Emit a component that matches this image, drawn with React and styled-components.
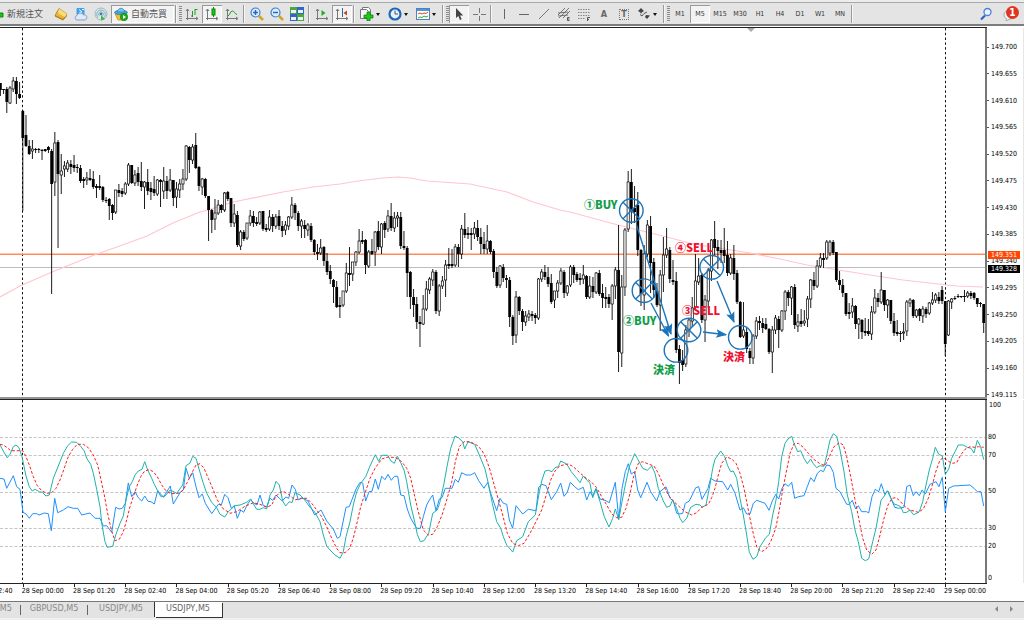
import React, { useState } from 'react';
import styled, { createGlobalStyle, css } from 'styled-components';

// one candle: high, body top, body bottom, low, direction (u / d)
const CANDLES = `
83 83 90 95 d|89 89 90 93 d|87 89 102 112 d|86 88 103 103 u|77 81 89 91 u|77 81 94 103 d|82 94 98 98 d|
110 111 138 210 d|115 135 146 146 d|140 146 154 154 d|140 149 151 158 u|148 149 150 152 d|148 149 150 152 d|149 150 151 159 d|149 149 151 151 d|
146 147 150 152 d|149 151 184 293 d|132 143 182 195 u|140 142 174 247 d|154 171 175 193 u|161 166 169 176 u|160 163 169 171 u|160 164 167 173 d|
155 165 168 171 d|164 167 168 172 d|165 168 181 182 d|177 179 181 187 d|172 178 180 184 u|169 178 180 180 d|171 179 187 188 d|184 186 188 197 d|
175 186 188 189 d|186 187 200 201 d|197 200 201 202 d|198 199 206 219 d|204 205 213 219 d|190 190 212 213 u|184 190 193 196 d|188 191 194 196 d|
182 184 193 194 u|163 165 184 185 u|165 165 183 183 d|170 175 183 185 u|167 173 182 185 d|162 181 187 190 d|181 182 187 208 u|169 182 191 194 d|
182 188 192 199 d|176 189 193 195 d|179 180 194 195 u|179 180 182 206 d|167 181 191 198 u|176 181 191 198 d|169 180 190 191 u|180 180 198 205 d|
182 189 197 207 u|179 184 190 197 u|169 179 184 189 u|145 146 179 180 u|146 147 160 172 d|144 147 160 163 u|133 145 168 168 d|166 167 186 190 d|
178 179 187 194 u|178 179 196 197 d|196 196 210 240 d|209 210 220 232 d|199 213 219 229 u|200 205 213 214 u|204 205 210 212 d|192 193 210 211 u|
191 192 199 200 d|198 198 223 226 d|204 214 223 226 u|211 215 245 246 d|230 232 246 249 u|230 232 239 240 d|223 223 238 239 u|210 216 223 225 u|
211 216 223 226 d|217 222 224 225 d|211 212 223 224 u|211 211 229 230 d|224 228 230 231 d|210 217 229 230 u|214 217 226 231 d|214 217 226 228 u|
210 216 226 229 d|221 226 231 236 d|221 225 230 234 u|216 217 226 229 u|197 205 217 218 u|203 205 213 219 d|211 213 226 230 d|219 221 226 237 u|
220 225 229 237 d|223 225 230 235 u|223 226 240 241 d|239 240 252 254 d|244 252 254 259 d|239 248 253 254 u|246 247 261 265 d|253 261 272 274 d|
265 271 279 283 d|279 280 287 302 d|281 287 307 307 d|297 305 307 317 d|291 291 305 306 u|263 273 291 292 u|247 273 275 285 d|262 262 274 280 u|
251 252 262 265 u|229 241 252 253 u|231 240 242 243 d|239 240 265 273 d|250 252 266 267 u|239 251 254 254 d|231 232 252 265 u|221 231 247 249 d|
223 224 247 253 u|221 223 230 237 d|210 216 229 231 u|203 216 228 230 d|212 218 228 231 u|212 216 218 226 u|212 217 246 248 d|231 246 248 249 d|
246 248 273 296 d|271 272 297 308 d|289 297 305 316 d|297 304 322 328 d|316 322 324 346 d|295 309 324 324 u|281 289 309 310 u|277 279 290 293 u|
269 272 280 285 u|270 272 311 313 d|284 286 311 315 u|276 281 286 288 u|260 265 280 296 u|248 264 266 268 d|249 264 266 267 d|244 247 265 266 u|
244 247 254 266 d|225 229 254 258 u|213 229 235 237 d|227 233 235 238 d|228 233 235 249 d|222 228 234 238 u|220 228 237 240 d|228 237 244 253 d|
232 244 249 253 d|225 241 249 253 u|240 241 252 253 d|249 251 272 277 d|267 272 286 287 d|265 266 285 287 u|264 267 278 281 d|275 278 280 287 d|
277 280 317 326 d|315 317 336 344 d|291 297 335 342 u|296 297 311 314 d|309 311 322 330 d|311 316 322 325 u|310 314 317 320 u|311 314 316 320 d|
313 315 318 323 d|278 279 318 319 u|269 272 279 281 u|265 272 277 279 d|267 277 284 286 d|274 283 302 303 d|291 291 300 307 u|280 283 291 297 u|
268 271 283 284 u|270 272 293 297 d|285 286 293 295 u|265 267 285 286 u|265 267 275 282 d|272 274 280 281 d|273 278 280 284 d|265 275 279 283 u|
275 276 297 298 d|276 286 297 298 u|277 286 292 297 d|272 273 292 293 u|270 273 294 295 d|284 293 298 307 d|287 297 299 307 d|294 297 304 307 d|
284 286 304 319 u|267 270 286 298 u|225 270 352 371 d|275 287 353 366 u|228 230 287 295 u|171 182 229 231 u|169 182 211 223 d|186 208 212 222 d|
192 205 250 255 d|249 250 294 305 d|245 254 295 309 u|220 225 254 256 u|216 226 263 292 d|258 262 290 297 d|283 291 305 306 d|270 275 305 330 u|
237 255 275 291 u|228 249 255 257 u|247 250 279 282 d|260 280 282 284 d|272 281 350 352 d|345 349 363 383 d|350 360 365 370 d|325 330 364 366 u|
318 320 330 336 u|297 308 321 326 u|254 281 307 308 u|258 276 282 284 u|273 275 320 322 d|295 300 320 341 u|268 270 301 307 u|239 240 271 280 u|
221 239 248 255 d|240 247 251 268 d|240 250 253 262 d|228 250 256 262 d|241 255 273 275 d|254 258 273 274 u|245 258 274 279 d|270 273 302 303 d|
301 302 337 337 d|302 330 336 337 u|328 332 349 352 d|348 351 358 363 d|334 336 358 363 u|317 321 336 338 u|316 321 323 329 d|318 323 328 332 d|
318 324 329 329 d|328 329 352 353 d|326 330 352 372 u|315 318 330 333 u|316 319 330 347 d|310 311 330 331 u|290 292 311 319 u|290 292 298 305 d|
286 287 298 314 u|284 287 325 328 d|314 322 326 331 u|309 321 324 326 d|310 321 323 325 u|296 299 319 326 u|279 280 299 307 u|272 280 286 289 d|
260 266 286 287 u|253 258 266 267 u|253 258 260 267 d|240 242 258 259 u|240 242 253 255 u|240 242 253 254 d|252 252 280 281 d|271 280 285 289 d|
279 285 293 296 d|293 293 314 315 d|303 312 314 318 d|298 306 312 317 u|305 306 324 328 d|318 319 324 338 u|319 320 332 338 d|318 331 333 335 d|
319 331 334 335 d|306 312 334 339 u|289 298 312 313 u|293 298 302 306 d|272 290 302 303 u|290 290 305 310 d|299 300 305 317 u|300 300 321 323 d|
313 321 333 335 d|320 332 334 335 d|331 333 334 341 d|323 332 333 339 u|300 302 331 335 u|298 300 303 306 u|299 300 316 317 d|309 310 316 317 u|
308 309 316 320 d|306 309 316 322 u|307 309 314 317 d|302 303 313 314 u|292 300 303 304 u|293 295 300 302 u|292 297 301 303 d|286 290 301 303 d|
301 301 344 355 d|300 301 335 335 u|298 299 302 308 u|296 298 299 299 d|294 296 297 297 d|296 296 297 297 d|290 296 297 301 d|291 293 296 297 u|
291 293 296 298 d|292 293 298 299 d|298 298 304 306 d|302 303 304 306 d|304 304 323 332 d`
  .split('|')
  .map(row => row.trim().split(' '))
  .map(([high, top, bottom, low, dir], i) => ({
    x: 22.8 + (i - 7) * 3.203,
    high: +high,
    top: +top,
    bottom: +bottom,
    low: +low,
    up: dir === 'u',
  }));

const MOVING_AVERAGE =
  '0,297 20,286 52,272 67,266 97,254 117,247 147,236 173,223 200,212 208,210 233,202 283,192 313,187 340,184 358,181 383,178 398,177 410,178 427,181 470,184 507,192 533,202 560,210 570,212 618,225 667,237 693,244 750,253 780,259 807,265 870,275 903,280 947,285 957,286 983,287';

// oscillator traces: three blocks of 340px each, three units per pixel
const RSI = [
  '0,250 12,252 20,280 40,242 50,275 60,283 69,352 78,357 88,370 98,356 110,356 117,360 133,354 145,356 154,407 164,310 173,353 190,345 204,335 220,340 233,340 245,360 270,354 285,370 300,370 310,393 320,392 335,412 347,337 357,342 367,340 376,325 385,264 395,305 405,290 415,308 425,318 434,303 444,319 453,320 463,327 473,287 482,304 492,304 511,273 520,327 540,293 550,285 558,220 568,250 578,233 588,275 597,308 607,297 616,325 635,356 655,328 664,330 674,298 684,308 694,340 703,332 712,370 722,345 731,352 741,330 752,314 762,325 771,330 780,300 790,332 800,335 810,310 818,316 828,300 838,310 847,318 857,306 866,310 876,270 886,283 895,315 905,310 915,312 924,318 944,360 963,345 980,378 1000,402 1012,430',
  '0,425 18,337 28,335 48,282 60,262 68,264 77,318 87,290 96,289 106,252 115,283 125,244 135,254 144,238 154,256 163,244 173,244 182,300 192,302 202,342 212,370 230,400 241,400 250,365 260,330 270,312 278,300 288,347 298,312 306,308 316,280 336,280 346,253 355,262 365,233 378,240 392,240 404,233 416,257 432,280 443,262 452,295 470,347 480,310 490,325 500,328 508,375 518,400 528,332 548,357 565,343 588,347 596,277 606,268 618,272 634,314 650,290 662,264 672,304 682,292 691,262 704,275 715,284 730,277 740,315 750,290 758,304 768,280 780,312 795,316 808,323 826,262 836,372 846,280 856,230 865,206 874,237 884,230 893,285 902,308 921,262 932,290 950,318 960,290 978,275 990,310 1000,318 1010,355',
  '0,357 8,355 16,325 28,318 47,278 56,275 66,313 84,280 92,250 105,258 128,260 143,285 152,268 165,295 180,345 190,338 200,357 210,357 220,325 230,316 255,325 267,346 277,318 287,298 296,312 306,280 315,266 325,274 335,262 344,310 355,305 372,302 382,275 392,248 402,260 412,235 422,226 430,230 440,210 450,212 460,232 468,280 480,290 500,328 508,328 517,316 527,342 535,332 545,350 560,350 566,354 576,305 586,283 596,290 604,266 614,298 624,288 634,313 644,337 655,340 672,337 680,275 690,270 700,302 708,290 718,302 726,285 736,297 750,268 768,260 777,275 787,247 796,350 806,280 820,273 870,270 882,280 892,290 903,290 911,333',
];

const STOCHASTIC = [
  '0,150 10,168 22,188 30,178 40,155 48,150 57,158 66,185 78,243 88,275 97,288 105,283 118,290 127,292 138,303 148,300 160,250 180,200 190,175 203,152 215,141 230,142 243,155 253,168 260,190 272,208 280,235 290,283 300,335 306,390 315,440 322,457 338,454 347,420 360,385 370,363 378,315 388,275 397,260 405,240 415,228 426,223 434,200 443,225 455,250 463,268 472,285 490,307 500,298 510,285 530,295 548,270 558,212 570,204 578,184 588,190 598,225 610,265 620,295 635,322 650,338 660,358 674,366 685,350 694,342 704,332 720,330 740,322 752,312 762,330 770,343 780,343 790,338 800,342 810,300 820,285 828,259 838,270 848,318 857,333 868,320 876,323 885,293 900,300 912,312 930,337 945,352 960,380 970,420 980,453 990,465 1005,480',
  '0,490 10,470 18,425 30,380 40,330 50,290 62,265 77,245 90,213 106,179 116,199 125,181 143,181 153,198 163,205 172,184 182,203 192,225 200,260 212,330 225,385 232,418 241,440 252,437 266,415 278,355 292,345 300,320 312,265 322,210 332,160 345,123 355,128 368,140 374,162 384,140 404,148 418,180 435,222 445,265 457,325 470,380 482,400 490,425 500,450 518,471 530,437 548,425 565,380 586,360 598,290 606,255 615,228 625,226 636,230 645,218 655,215 662,198 680,207 694,230 710,250 720,263 730,243 740,255 750,265 758,308 768,282 780,320 793,365 807,396 818,370 826,342 836,374 846,320 856,270 868,215 884,176 892,190 908,220 922,226 935,213 945,235 955,280 970,318 980,337 990,333 998,315 1010,340',
  '0,370 8,383 20,370 32,337 48,328 60,330 67,337 78,330 88,280 98,220 105,193 122,168 134,185 143,212 152,230 160,228 170,250 180,310 190,360 200,420 208,472 219,493 230,485 240,455 257,428 268,418 278,360 288,315 296,260 305,185 315,145 324,132 335,124 343,148 353,170 362,167 372,190 382,206 392,192 400,206 410,218 420,212 432,214 440,182 450,135 460,116 470,124 480,165 492,230 502,300 515,350 525,405 535,440 545,490 556,497 566,492 578,440 588,400 597,350 603,316 613,303 622,287 632,308 642,327 652,330 662,335 670,353 680,352 690,345 700,359 710,355 718,350 728,320 738,270 748,225 758,190 766,157 776,178 787,183 796,238 806,222 815,190 825,170 835,150 850,150 862,157 873,160 882,174 892,136 902,155 911,194',
];

const SIGNAL = [
  '0,148 10,150 22,158 32,167 68,167 78,185 88,210 100,245 112,272 125,287 140,295 155,293 168,280 180,255 192,222 205,185 218,163 232,148 250,148 265,158 280,180 293,210 303,255 313,300 322,350 334,405 345,437 358,433 370,410 380,375 390,335 400,305 412,270 422,245 434,228 448,224 460,230 472,245 485,270 500,290 515,296 535,295 550,285 562,262 575,235 588,210 600,206 612,220 625,250 640,285 652,315 668,340 690,355 710,350 735,334 760,323 780,328 800,337 815,330 828,303 848,288 865,298 885,315 905,309 920,310 935,325 950,345 965,365 980,395 995,430 1010,460',
  '0,473 15,473 28,462 40,430 52,380 62,335 75,295 90,250 105,220 125,192 145,186 168,188 185,200 200,220 212,250 222,295 235,350 250,405 265,420 278,418 292,395 306,360 320,315 335,262 346,200 358,155 372,140 390,140 410,150 425,165 438,190 450,225 462,268 474,310 488,360 502,415 518,445 535,452 552,445 570,415 588,380 605,345 620,295 632,255 645,228 660,212 685,207 700,215 718,232 735,247 755,262 770,278 785,305 800,330 815,357 830,368 845,367 858,340 870,295 882,240 895,205 908,200 925,207 942,213 955,235 970,270 985,300 1000,318',
  '0,337 15,350 35,360 50,353 65,337 85,328 95,308 105,280 115,240 125,205 140,186 155,192 168,205 180,235 192,280 202,330 212,380 222,425 232,460 245,470 258,462 272,440 287,400 298,345 308,285 320,225 330,175 342,147 355,145 370,157 385,175 400,192 418,205 435,212 448,185 462,155 478,143 490,150 500,185 512,245 524,310 536,370 548,430 560,465 575,478 588,465 600,420 612,370 624,330 636,310 648,308 660,318 675,335 690,345 715,352 730,342 745,310 757,270 768,228 780,195 790,188 800,195 815,205 830,203 842,180 855,163 870,155 885,157 895,155 911,157',
];

const toPoints = blocks =>
  blocks
    .map((block, i) =>
      block
        .split(' ')
        .map(pair => pair.split(',').map(Number))
        .map(([x, y]) => `${(i * 340 + x / 3).toFixed(1)},${(395 + y / 3).toFixed(1)}`)
        .join(' '),
    )
    .join(' ');

const PRICES = [
  '149.700', '149.655', '149.610', '149.565', '149.520', '149.475', '149.430',
  '149.385', '149.340', '149.295', '149.250', '149.205', '149.160', '149.115',
];

const TIMES = [
  '27 Sep 22:40', '28 Sep 00:00', '28 Sep 01:20', '28 Sep 02:40', '28 Sep 04:00',
  '28 Sep 05:20', '28 Sep 06:40', '28 Sep 08:00', '28 Sep 09:20', '28 Sep 10:40',
  '28 Sep 12:00', '28 Sep 13:20', '28 Sep 14:40', '28 Sep 16:00', '28 Sep 17:20',
  '28 Sep 18:40', '28 Sep 20:00', '28 Sep 21:20', '28 Sep 22:40', '29 Sep 00:00',
];

const LEVELS = [
  { value: 80, span: 20 },
  { value: 70, span: 10 },
  { value: 50, span: 20 },
  { value: 30, span: 20 },
  { value: 20, span: 10 },
];

const PERIODS = ['M1', 'M5', 'M15', 'M30', 'H1', 'H4', 'D1', 'W1', 'MN'];

const TABS = ['M5', 'GBPUSD,M5', 'USDJPY,M5', 'USDJPY,M5'];

const ICONS = {
  plus: <path d="M5 2h4v4h4v4H9v4H5v-4H1V6h4z" fill="#1fc01f" stroke="#0a8a0a" />,
  book: (
    <>
      <path d="M1 8.5 5 1.5l8 5.5-4 5.5z" fill="#e9b53a" stroke="#a87412" strokeWidth=".8" />
      <path d="M5 1.5 4 6l7.500 4.500L13 7z" fill="#f9dc7c" />
      <path d="m1 8.500 8 4 4-5v1.500l-4 4.500-8-4z" fill="#b27a14" />
    </>
  ),
  cloud: (
    <>
      <rect x="2.500" y="1" width="8" height="7" rx="1" fill="#3ea2ea" />
      <path d="M5 2.500 8 5M8 2.500h2M5 6l3-1" stroke="#fff" />
      <path d="M3 13a2.300 2.300 0 0 1 0-4.500 3.500 3.500 0 0 1 6.500-.6A2.600 2.600 0 1 1 11 13z" fill="#dfe8f5" stroke="#7d9cc8" strokeWidth=".9" />
    </>
  ),
  signal: (
    <>
      <circle cx="7" cy="7" r="6" fill="#dce9e6" stroke="#9db8c4" />
      <path d="M4 10.500a4.300 4.300 0 1 1 6 0M5.300 8.800a2.300 2.300 0 1 1 3.400 0" fill="none" stroke="#7faebb" />
      <circle cx="7" cy="7" r="1.300" fill="#3c78c0" />
      <path d="M7 8v5.500l4-1.500z" fill="#42b54c" />
    </>
  ),
  robot: (
    <>
      <path d="M1 6.500h11L9 13H4z" fill="#f2c230" stroke="#b98712" strokeWidth=".7" />
      <ellipse cx="7" cy="5.500" rx="6.500" ry="2.300" fill="#4ea3d6" stroke="#2c7cae" strokeWidth=".7" />
      <path d="M3.500 5c0-5 7-5 7 0z" fill="#7cc4ec" stroke="#2c7cae" strokeWidth=".7" />
      <circle cx="10" cy="10" r="3.700" fill="#19ad19" stroke="#0b7f0b" strokeWidth=".6" />
      <path d="M9 8v4l3-2z" fill="#fff" />
    </>
  ),
  bars: (
    <>
      <Axes />
      <path d="M7.500 10V4M10 8V2M10 2.500h2.500M6 9h1.500" stroke="#1f9e1f" fill="none" />
    </>
  ),
  candles: (
    <>
      <Axes />
      <path d="M8.500 0v10" stroke="#0a8a0a" />
      <rect x="7" y="2" width="3" height="6" fill="#12cc12" stroke="#0a8a0a" />
    </>
  ),
  line: (
    <>
      <Axes />
      <path d="M3 9c2-1 2-5 4.500-5 2 0 2 3 4.500 3.500" stroke="#1f9e1f" fill="none" />
    </>
  ),
  zoomIn: (
    <>
      <path d="m9 9 4 4" stroke="#d3a327" strokeWidth="2.500" />
      <circle cx="5.500" cy="5.500" r="4.500" fill="#dcedff" stroke="#3e80cd" strokeWidth="1.200" />
      <path d="M3 5.500h5M5.500 3v5" stroke="#2867b8" strokeWidth="1.500" />
    </>
  ),
  zoomOut: (
    <>
      <path d="m9 9 4 4" stroke="#d3a327" strokeWidth="2.500" />
      <circle cx="5.500" cy="5.500" r="4.500" fill="#dcedff" stroke="#3e80cd" strokeWidth="1.200" />
      <path d="M3 5.500h5" stroke="#2867b8" strokeWidth="1.500" />
    </>
  ),
  tile: (
    <>
      <path d="M0 0h7v7H0zM7 7h7v7H7z" fill="#4aa83c" />
      <path d="M7 0h7v7H7zM0 7h7v7H0z" fill="#3565c8" />
      <path d="M1 3h5v3H1zM8 3h5v3H8zM1 10h5v3H1zM8 10h5v3H8z" fill="#eaf2ff" />
    </>
  ),
  scroll: (
    <>
      <Axes />
      <path d="M6.500 3v6l4-3z" fill="#1fae1f" />
    </>
  ),
  shift: (
    <>
      <Axes />
      <path d="M7.500 1v9" stroke="#2b6ca8" />
      <path d="M12 3.500v5L8.500 6z" fill="#c8451c" />
    </>
  ),
  indicator: (
    <>
      <path d="M2.500 3.500v-3h6l2 2v6" fill="#fff" stroke="#777" />
      <path d="M.5 2.500h6l2 2v7h-8z" fill="#f7f7f7" stroke="#777" />
      <path d="M7 5h3v3h3v3h-3v3H7v-3H4V8h3z" fill="#22c722" stroke="#0b860b" strokeWidth=".8" />
    </>
  ),
  clock: (
    <>
      <circle cx="7" cy="7" r="5.500" fill="#e6f1fb" stroke="#1d66b8" strokeWidth="2.200" />
      <path d="M7 3.500V7h3" fill="none" stroke="#555" />
    </>
  ),
  template: (
    <>
      <rect x=".5" y="1.500" width="13" height="11" fill="#fff" stroke="#4d83bd" />
      <path d="M1 2h12v2H1z" fill="#5794d3" />
      <path d="m2 7 2-1 2 1 2-1 2 .5L12 5" stroke="#d0452c" fill="none" />
      <path d="m2 11 2-1 2 .5L8 9l2 1 2-1" stroke="#35a035" fill="none" />
    </>
  ),
  cursor: <path d="M4 1v10l2.300-2 1.700 4 1.700-.8L8 8.500h3.200z" fill="#444" />,
  cross: <path d="M7.500 1v5M7.500 9v5M1 7.500h5M9 7.500h5" stroke="#777" />,
  vline: <path d="M7.500 2v10" stroke="#666" />,
  hline: <path d="M2 7.500h10" stroke="#666" />,
  trend: <path d="m2 12 10-10" stroke="#777" />,
  channel: (
    <>
      <path d="M1 8 8 1M2 11 12 1M6 11l7-7M1 6l10-1M1 9l10-1" stroke="#666" strokeWidth=".9" fill="none" />
      <path d="M12.500 10.500H10.500v3h2M10.500 12h2" stroke="#555" fill="none" />
    </>
  ),
  fibo: (
    <>
      <path d="M1 2.500h12M1 5.500h12M1 8.500h12M1 11.500h7" stroke="#888" strokeDasharray="1.500 1" />
      <path d="M10.500 14v-3.500H13M10.500 12.500H12" stroke="#555" fill="none" />
    </>
  ),
  shapes: (
    <>
      <path d="m4 1 3 3-3 2-3-2zM9 8l4 .5-3 3.500-2-2z" fill="#444" />
      <path d="M3 7.500 5 9l2-2.500L10 5M4 6.500v-2" stroke="#555" fill="none" />
    </>
  ),
  search: (
    <>
      <path d="m6 8.500-4 4" stroke="#2a62c8" strokeWidth="2.200" />
      <circle cx="8.500" cy="5" r="3.500" fill="#eef3fc" stroke="#4a7fdc" strokeWidth="1.300" />
    </>
  ),
  chat: <path d="M1 8c0-3 3-5 6-5s6 2 6 4.500S10 12 7 12l-4 2 .6-2.500C2 11 1 9.500 1 8z" fill="#f4f4f4" stroke="#aaa" />,
};

function Axes() {
  return (
    <path
      d="M2.500 13V2.500M1 4l1.500-2L4 4M1 11.500h11.500M11 10l2 1.500-2 1.500"
      fill="none"
      stroke="#777"
    />
  );
}

const Icon = ({ name }) => (
  <IconSvg viewBox="0 0 14 14" aria-hidden="true">
    {ICONS[name]}
  </IconSvg>
);

const Tool = ({ name, label, pressed }) => (
  <ToolButton $pressed={pressed} aria-label={label}>
    <Icon name={name} />
  </ToolButton>
);

const DropTool = ({ name, label }) => (
  <DropButton aria-label={label}>
    <Icon name={name} />
    <Caret />
  </DropButton>
);

const Toolbar = () => {
  const [period, setPeriod] = useState('M5');

  return (
    <ToolbarWrapper>
      <NewOrderButton>
        <Icon name="plus" />
        新規注文
      </NewOrderButton>
      <Tool name="book" label="history" />
      <Tool name="cloud" label="cloud" />
      <Tool name="signal" label="signal" />
      <AutoTradeButton $pressed>
        <Icon name="robot" />
        自動売買
      </AutoTradeButton>
      <Separator />
      <Grip />
      <Tool name="bars" label="bars" />
      <Tool name="candles" label="candles" pressed />
      <Tool name="line" label="line" />
      <Separator />
      <Tool name="zoomIn" label="zoom in" />
      <Tool name="zoomOut" label="zoom out" />
      <Tool name="tile" label="tile" />
      <Separator />
      <Tool name="scroll" label="scroll" />
      <Tool name="shift" label="shift" pressed />
      <Separator />
      <DropTool name="indicator" label="indicators" />
      <DropTool name="clock" label="periods" />
      <DropTool name="template" label="templates" />
      <Separator />
      <Grip />
      <Tool name="cursor" label="cursor" pressed />
      <Tool name="cross" label="crosshair" />
      <Separator />
      <Tool name="vline" label="vertical line" />
      <Tool name="hline" label="horizontal line" />
      <Tool name="trend" label="trend line" />
      <Tool name="channel" label="channel" />
      <Tool name="fibo" label="fibonacci" />
      <ToolButton>
        <Letter>A</Letter>
      </ToolButton>
      <ToolButton>
        <Letter $boxed>T</Letter>
      </ToolButton>
      <DropTool name="shapes" label="shapes" />
      <Separator />
      <Grip />
      {PERIODS.map(item => (
        <ToolButton key={item} $pressed={item === period} onClick={() => setPeriod(item)}>
          {item}
        </ToolButton>
      ))}
      <Separator />
      <Spacer />
      <Tool name="search" label="search" />
      <NotifyButton>
        <Icon name="chat" />
        <Badge>1</Badge>
      </NotifyButton>
    </ToolbarWrapper>
  );
};

const Candle = ({ x, high, top, bottom, low, up }) => (
  <g>
    <line x1={x} x2={x} y1={high} y2={low + 1} stroke="#000" strokeWidth="0.9" />
    <rect
      x={up ? x - 1.1 : x - 1.4}
      y={top}
      width={up ? 2.2 : 2.8}
      height={Math.max(bottom - top, 1)}
      fill={up ? '#fff' : '#000'}
      stroke={up ? '#000' : 'none'}
      strokeWidth="0.7"
    />
  </g>
);

const Entry = ({ x, y, crossed }) => (
  <g fill="none" stroke="#1b75bc" strokeWidth="1.4">
    <circle cx={x} cy={y} r="11.8" />
    {crossed && <path d={`M${x - 8.3} ${y - 8.3}l16.6 16.6m0-16.6l-16.6 16.6`} />}
  </g>
);

const Arrow = ({ d }) => (
  <path d={d} fill="none" stroke="#1b75bc" strokeWidth="1.4" markerEnd="url(#head)" />
);

const PricePlot = () => (
  <Canvas viewBox="0 28 985 369" preserveAspectRatio="none">
    <defs>
      <marker id="head" viewBox="0 0 10 8" refX="9" refY="4" markerWidth="11" markerHeight="9" markerUnits="userSpaceOnUse" orient="auto">
        <path d="M0 0l10 4L0 8l2-4z" fill="#1b75bc" />
      </marker>
    </defs>
    <path d="M747 28h8l-4 4z" fill="#aaa" />
    <path d="M22.500 28v369M945.500 28v369" stroke="#111" strokeDasharray="2.400 2.400" />
    <path d="M0 267.500h985" stroke="#bdbdbd" />
    <path d="M0 254.300h985" stroke="#ff8a5e" strokeWidth="1.600" />
    <polyline points={MOVING_AVERAGE} fill="none" stroke="#ffc6cf" strokeWidth="1.200" />
    {CANDLES.map(candle => (
      <Candle key={candle.x} {...candle} />
    ))}
    <Entry x={631.3} y={210.5} crossed />
    <Entry x={644} y={290.7} crossed />
    <Entry x={689} y={330} crossed />
    <Entry x={711.7} y={267.3} crossed />
    <Entry x={676} y={350.3} />
    <Entry x={740.3} y={337.3} />
    <Arrow d="M636.500 225l34.500 109" />
    <Arrow d="M651 303l17.500 33" />
    <Arrow d="M717 281l17 41" />
    <Arrow d="M703 332l23 2.700" />
    <Note x="584" y="209">①BUY</Note>
    <Note x="623" y="325">②BUY</Note>
    <Note x="653" y="374">決済</Note>
    <Note x="682" y="315" $sell>③SELL</Note>
    <Note x="675" y="252" $sell>④SELL</Note>
    <Note x="723" y="361" $sell>決済</Note>
  </Canvas>
);

const OscillatorPlot = () => (
  <Canvas viewBox="0 400 985 183" preserveAspectRatio="none">
    <path
      d="M0 437.500h985M0 455.500h985M0 492.500h985M0 528.500h985M0 546.500h985"
      stroke="#c4c4c4"
      strokeDasharray="3 1.800"
    />
    <path d="M22.500 400v183M945.500 400v183" stroke="#111" strokeDasharray="2.400 2.400" />
    <g fill="none" strokeWidth="1">
      <polyline points={toPoints(RSI)} stroke="#1e90ff" />
      <polyline points={toPoints(STOCHASTIC)} stroke="#20b2aa" />
      <polyline points={toPoints(SIGNAL)} stroke="#ff1a1a" strokeDasharray="2.800 1.900" />
    </g>
  </Canvas>
);

const App = () => {
  const [tab, setTab] = useState(3);

  return (
    <AppWrapper>
      <GlobalStyle />
      <Toolbar />
      <ChartArea>
        <PricePane>
          <Plot>
            <PricePlot />
          </Plot>
          <PriceAxis>
            {PRICES.map(price => (
              <PriceLabel key={price}>{price}</PriceLabel>
            ))}
            <PriceTag $at="60.200%" $color="#ff4500">149.351</PriceTag>
            <PriceTag $at="63.900%" $color="#000">149.328</PriceTag>
          </PriceAxis>
        </PricePane>
        <PaneDivider />
        <OscillatorPane>
          <Plot>
            <OscillatorPlot />
          </Plot>
          <LevelAxis>
            <TopLevel>100</TopLevel>
            {LEVELS.map(({ value, span }) => (
              <Level key={value} $span={span}>
                {value}
              </Level>
            ))}
            <LastLevel $span={20}>0</LastLevel>
          </LevelAxis>
        </OscillatorPane>
        <TimeAxis>
          {TIMES.map(time => (
            <TimeLabel key={time}>{time}</TimeLabel>
          ))}
        </TimeAxis>
      </ChartArea>
      <TabBar>
        {TABS.map((name, i) => (
          <Tab key={i} $first={i === 0} $active={i === tab} onClick={() => setTab(i)}>
            {name}
          </Tab>
        ))}
        <Spacer />
        <ScrollButton aria-label="previous">
          <ScrollArrow viewBox="0 0 5 6"><path d="M4 0v6L1 3z" /></ScrollArrow>
        </ScrollButton>
        <ScrollButton aria-label="next">
          <ScrollArrow viewBox="0 0 5 6"><path d="M1 0v6l3-3z" /></ScrollArrow>
        </ScrollButton>
      </TabBar>
    </AppWrapper>
  );
};

export default App;

const GlobalStyle = createGlobalStyle`
  * {
    box-sizing: border-box;
  }

  body {
    margin: 0;
    overflow: hidden;
    font-family: 'DejaVu Sans Condensed', 'DejaVu Sans', 'Noto Sans CJK JP', sans-serif;
  }

  button {
    margin: 0;
    padding: 0;
    border: 0;
    background: none;
    font: inherit;
    color: inherit;
  }
`;

const AppWrapper = styled.div`
  height: 100vh;
  display: flex;
  flex-direction: column;
  overflow: hidden;
  background: #f0f0f0;
`;

const ToolbarWrapper = styled.div`
  flex: none;
  height: 26px;
  display: flex;
  align-items: stretch;
  border-top: 2px solid #ececec;
  border-bottom: 2px solid #7c7c7c;
  box-shadow: inset 0 1px 0 #a9a9a9;
  padding: 3px 0 1px;
  background: #e4e4e4;
  color: #333;
  font-size: 7px;
`;

const pressedStyle = css`
  background: #f3f3f3;
  box-shadow: inset 1px 1px 0 #9a9a9a, inset -1px -1px 0 #fff;
`;

const ToolButton = styled.button`
  flex: none;
  width: 20px;
  display: flex;
  align-items: center;
  justify-content: center;
  ${({ $pressed }) => $pressed && pressedStyle}
`;

const DropButton = styled(ToolButton)`
  width: 28px;
  justify-content: flex-start;
  padding-left: 3px;
  gap: 2px;
`;

const NewOrderButton = styled(ToolButton)`
  width: 51px;
  justify-content: flex-start;
  gap: 3px;
  font-family: 'Noto Sans CJK JP', sans-serif;
  font-size: 9px;
  line-height: 12px;
  white-space: nowrap;
  color: #555;

  svg {
    margin-left: -10px;
  }
`;

const AutoTradeButton = styled(NewOrderButton)`
  width: 63px;

  svg {
    margin-left: 3px;
  }
`;

const NotifyButton = styled(ToolButton)`
  position: relative;
  width: 28px;
`;

const Badge = styled.span`
  position: absolute;
  top: 1px;
  right: 5px;
  width: 13px;
  height: 13px;
  border-radius: 50%;
  background: #e0351f;
  color: #fff;
  font-size: 10px;
  font-weight: bold;
  line-height: 13px;
  text-align: center;
`;

const IconSvg = styled.svg`
  flex: none;
  width: 14px;
  height: 14px;
`;

const Letter = styled.span`
  font-size: 9px;
  font-weight: bold;
  line-height: 9px;
  color: #666;
  border: ${({ $boxed }) => ($boxed ? '1px dotted #777' : '0')};
  padding: ${({ $boxed }) => ($boxed ? '0 1px' : '0')};
`;

const Caret = styled.span`
  border: 2px solid transparent;
  border-top-width: 3px;
  border-bottom: 0;
  border-top-color: #111;
`;

const Separator = styled.span`
  flex: none;
  width: 2px;
  margin: 0 2px 0 1px;
  border-left: 1px solid #9a9a9a;
  border-right: 1px solid #f6f6f6;
`;

const Grip = styled.span`
  flex: none;
  width: 3px;
  margin: 1px 0;
  background: repeating-linear-gradient(#8c8c8c 0 1px, #e4e4e4 1px 2px);
`;

const Spacer = styled.div`
  flex-grow: 1;
`;

const ChartArea = styled.div`
  flex: 1;
  min-height: 0;
  display: flex;
  flex-direction: column;
  padding-top: 1px;
  background: #fff;
  font-size: 7px;
  line-height: 8px;
  color: #000;
`;

const PricePane = styled.div`
  flex: 369 1 0;
  min-height: 0;
  display: flex;
  margin-top: 1px;
`;

const OscillatorPane = styled.div`
  flex: 183 1 0;
  min-height: 0;
  display: flex;
`;

const Plot = styled.div`
  flex: 1;
  min-width: 0;
  border-right: 2px solid #777;
  box-shadow: 0 -1px 0 #222;
`;

const Canvas = styled.svg`
  display: block;
  width: 100%;
  height: 100%;
`;

const Note = styled.text`
  font-family: 'Noto Sans CJK JP', sans-serif;
  font-size: 11px;
  font-weight: 900;
  fill: ${({ $sell }) => ($sell ? '#f01030' : '#0f9d48')};
`;

const PaneDivider = styled.div`
  flex: none;
  height: 3px;
  margin-right: 37px;
  border-top: 2px solid #949494;
  background: #222;
`;

const PriceAxis = styled.div`
  position: relative;
  flex: none;
  width: 37px;
  display: flex;
  flex-direction: column;
  justify-content: space-between;
  margin-bottom: -2px;
  padding-top: 15px;
  border-right: 1px solid #e6e6e6;
`;

const PriceLabel = styled.span`
  display: flex;
  align-items: center;
  gap: 2px;

  &::before {
    content: '';
    width: 2px;
    height: 1px;
    background: #555;
  }
`;

const PriceTag = styled.span`
  position: absolute;
  left: 1px;
  top: ${({ $at }) => $at};
  width: 32px;
  padding-left: 3px;
  background: ${({ $color }) => $color};
  color: #fff;
`;

const LevelAxis = styled.div`
  flex: none;
  width: 37px;
  display: flex;
  flex-direction: column;
  padding-left: 1px;
  border-right: 1px solid #e6e6e6;
`;

const TopLevel = styled.span`
  height: 8px;
  margin: 1px 0 -9px;
  padding-left: 1px;
`;

const Level = styled.span`
  flex: ${({ $span }) => $span} 1 0;
  display: flex;
  align-items: flex-end;

  /* keeps the value centred on its level line */
  position: relative;
  top: 4px;
`;

const LastLevel = styled(Level)`
  top: -1px;
`;

const TimeAxis = styled.div`
  flex: none;
  height: 18px;
  display: flex;
  margin-right: 37px;
  border-top: 1px solid #222;
  padding-right: 2px;
`;

const TimeLabel = styled.span`
  flex: 0 0 5.203%;
  white-space: nowrap;

  &::before {
    content: '';
    display: block;
    width: 1px;
    height: 3px;
    margin-left: 1px;
    background: #222;
  }

  &:first-child {
    margin-left: -3%;
  }
`;

const TabBar = styled.div`
  flex: none;
  height: 17px;
  display: flex;
  margin-bottom: 2px;
  border-top: 1px solid #777;
  background: #e3e3e3;
`;

const Tab = styled.button`
  flex: none;
  width: ${({ $first }) => ($first ? '21px' : '67px')};
  height: 15px;
  padding-bottom: 3px;
  padding-right: ${({ $first }) => ($first ? '9px' : '1px')};
  display: flex;
  align-items: center;
  justify-content: ${({ $first }) => ($first ? 'flex-end' : 'center')};
  font-size: 9px;
  line-height: 12px;
  color: #888;
  background: linear-gradient(#666, #666) right 3px / 1px 10px no-repeat;

  ${({ $active }) =>
    $active &&
    css`
      background: #fff;
      color: #666;
      box-shadow: 1px 1px 0 #333, -1px 0 0 #333;
    `}
`;

const ScrollButton = styled.button`
  width: 15px;
  height: 13px;
  display: flex;
  align-items: center;
`;

const ScrollArrow = styled.svg`
  width: 5px;
  height: 6px;
  fill: #888;
`;
